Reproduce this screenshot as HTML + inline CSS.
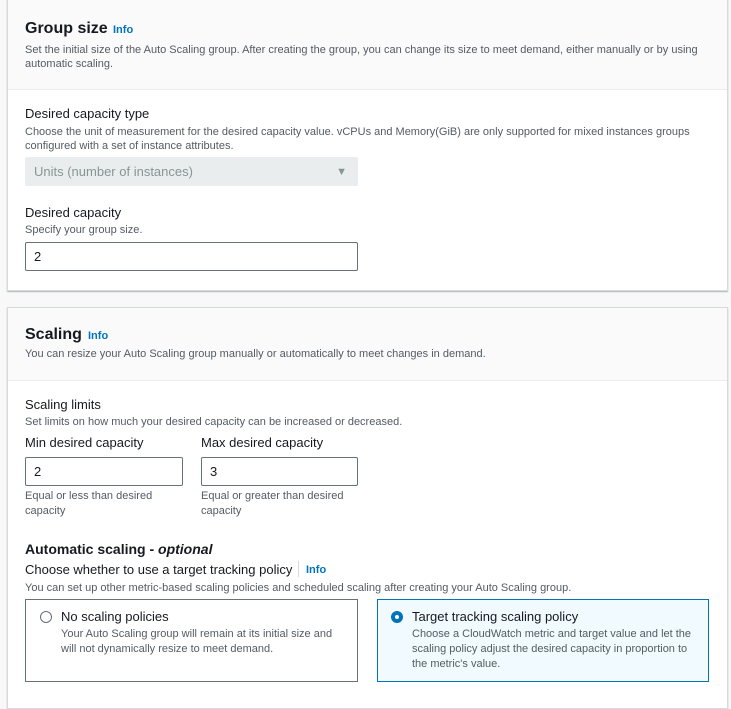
<!DOCTYPE html>
<html><head><style>
body{margin:0;width:731px;height:702px;background:#f8f8f8;font-family:"Liberation Sans",sans-serif;color:#16191f;position:relative;overflow:hidden}
.p{position:absolute;left:7px;width:719px;background:#fff;border:1px solid #d5dbdb;box-shadow:0 1px 1px rgba(0,28,36,.3)}
.h{position:absolute;left:0;right:0;top:0;background:#fafafa;border-bottom:1px solid #eaeded}
.a{position:absolute;white-space:nowrap}
.t{font-size:16px;font-weight:bold}
.i{font-size:11px;font-weight:bold;color:#0073bb}
.d{font-size:11px;color:#545b64;letter-spacing:0}
.l{font-size:13px;color:#16191f}
.in{position:absolute;border:1px solid #687078;border-radius:2px;background:#fff;font-size:13px;box-sizing:border-box;padding:0 0 0 8px;line-height:28px}
.card{position:absolute;box-sizing:border-box;border:1px solid #687078}
</style></head><body>
<div class="p" style="top:-1px;height:290px">
 <div class="h" style="height:89px"></div>
</div>
<div class="a t" style="left:25px;top:20px">Group size</div>
<div class="a i" style="left:113px;top:24px">Info</div>
<div class="a d" style="left:25px;top:43px;line-height:14px">Set the initial size of the Auto Scaling group. After creating the group, you can change its size to meet demand, either manually or by using<br>automatic scaling.</div>
<div class="a l" style="left:25px;top:106px">Desired capacity type</div>
<div class="a d" style="left:25px;top:125px;line-height:14px">Choose the unit of measurement for the desired capacity value. vCPUs and Memory(GiB) are only supported for mixed instances groups<br>configured with a set of instance attributes.</div>
<div class="in" style="left:25px;top:157px;width:333px;height:29px;background:#eaeded;border-color:#eaeded;color:#879596;font-size:13px">Units (number of instances)<span style="position:absolute;right:10px;top:0;font-size:11px;color:#879596">▼</span></div>
<div class="a l" style="left:25px;top:205px">Desired capacity</div>
<div class="a d" style="left:25px;top:224px">Specify your group size.</div>
<div class="in" style="left:25px;top:242px;width:333px;height:29px">2</div>

<div class="p" style="top:307px;height:400px">
 <div class="h" style="height:72px"></div>
</div>
<div class="a t" style="left:25px;top:326px">Scaling</div>
<div class="a i" style="left:88px;top:330px">Info</div>
<div class="a d" style="left:25px;top:348px">You can resize your Auto Scaling group manually or automatically to meet changes in demand.</div>
<div class="a l" style="left:25px;top:397px">Scaling limits</div>
<div class="a d" style="left:25px;top:416px">Set limits on how much your desired capacity can be increased or decreased.</div>
<div class="a l" style="left:25px;top:435px">Min desired capacity</div>
<div class="a l" style="left:201px;top:435px">Max desired capacity</div>
<div class="in" style="left:25px;top:457px;width:158px;height:29px">2</div>
<div class="in" style="left:201px;top:457px;width:157px;height:29px">3</div>
<div class="a d" style="left:25px;top:489px;line-height:15px">Equal or less than desired<br>capacity</div>
<div class="a d" style="left:201px;top:489px;line-height:15px">Equal or greater than desired<br>capacity</div>
<div class="a" style="left:25px;top:541px;font-size:14px;font-weight:bold">Automatic scaling - <i>optional</i></div>
<div class="a l" style="left:25px;top:562px">Choose whether to use a target tracking policy</div>
<div class="a" style="left:298px;top:561px;width:1px;height:16px;background:#d5dbdb"></div>
<div class="a i" style="left:306px;top:564px">Info</div>
<div class="a d" style="left:25px;top:582px">You can set up other metric-based scaling policies and scheduled scaling after creating your Auto Scaling group.</div>
<div class="card" style="left:25px;top:599px;width:333px;height:83px"></div>
<div class="a" style="left:40px;top:611px;width:10px;height:10px;border:1px solid #687078;border-radius:50%"></div>
<div class="a l" style="left:61px;top:609px">No scaling policies</div>
<div class="a d" style="left:61px;top:627px;line-height:15px">Your Auto Scaling group will remain at its initial size and<br>will not dynamically resize to meet demand.</div>
<div class="card" style="left:377px;top:599px;width:332px;height:83px;border-color:#0073bb;background:#f1faff"></div>
<div class="a" style="left:391px;top:611px;width:4px;height:4px;border:4px solid #0073bb;border-radius:50%;background:#fff"></div>
<div class="a l" style="left:412px;top:609px">Target tracking scaling policy</div>
<div class="a d" style="left:412px;top:627px;line-height:15px">Choose a CloudWatch metric and target value and let the<br>scaling policy adjust the desired capacity in proportion to<br>the metric's value.</div>
</body></html>
